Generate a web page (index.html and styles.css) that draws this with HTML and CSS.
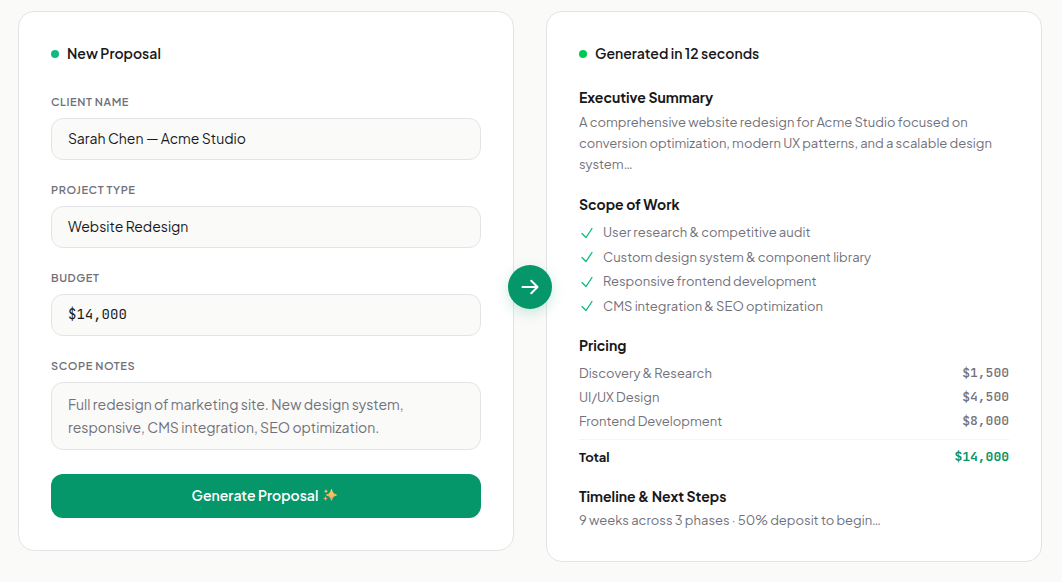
FILE: index.html
```html
<!DOCTYPE html>
<html lang="en">
<head>
    <meta charset="UTF-8">
    <meta name="viewport" content="width=device-width, initial-scale=1.0">
    <title>New Proposal</title>
    <link rel="stylesheet" href="styles.css">
</head>
<body>
<main class="demo">
    <form class="card">
        <h2 class="card-title"><span class="dot"></span>New Proposal</h2>
        <div class="field">
            <label for="client">CLIENT NAME</label>
            <input id="client" type="text" value="Sarah Chen — Acme Studio">
        </div>
        <div class="field">
            <label for="type">PROJECT TYPE</label>
            <input id="type" type="text" value="Website Redesign">
        </div>
        <div class="field">
            <label for="budget">BUDGET</label>
            <input id="budget" class="mono" type="text" value="$14,000">
        </div>
        <div class="field">
            <label for="notes">SCOPE NOTES</label>
            <textarea id="notes" rows="2">Full redesign of marketing site. New design system, responsive, CMS integration, SEO optimization.</textarea>
        </div>
        <button class="generate" type="button">
            Generate Proposal
            <svg width="17" height="14" viewBox="0 0 17 14" aria-hidden="true">
                <defs>
                    <linearGradient id="spark" x1="0" y1="0" x2="0" y2="1">
                        <stop offset="0" stop-color="#ffd65c"/>
                        <stop offset="1" stop-color="#ff9a5c"/>
                    </linearGradient>
                </defs>
                <path fill="url(#spark)" stroke="url(#spark)" stroke-linejoin="round" d="M8.5 1.5C9.2 4.8 10.4 6 13.5 7C10.4 8 9.2 9.2 8.5 12.5C7.8 9.2 6.6 8 3.5 7C6.6 6 7.8 4.8 8.5 1.5Z"/>
                <path fill="#ffc067" d="M3 1C3.4 2.5 3.8 2.9 5.3 3.3C3.8 3.7 3.4 4.1 3 5.6C2.6 4.1 2.2 3.7 .7 3.3C2.2 2.9 2.6 2.5 3 1Z"/>
                <path fill="#ffa565" d="M2.5 8C2.9 9.7 3.4 10.2 5 10.6C3.4 11 2.9 11.5 2.5 13.2C2.1 11.5 1.6 11 0 10.6C1.6 10.2 2.1 9.7 2.5 8Z"/>
            </svg>
        </button>
    </form>

    <div class="arrow">
        <svg width="20" height="20" viewBox="0 0 24 24" aria-hidden="true">
            <path d="M13.5 4.5 21 12m0 0-7.5 7.5M21 12H3"/>
        </svg>
    </div>

    <article class="card">
        <h2 class="card-title"><span class="dot dot-done"></span>Generated in 12 seconds</h2>
        <section>
            <h3>Executive Summary</h3>
            <p class="summary">A comprehensive website redesign for Acme Studio focused on conversion optimization, modern UX patterns, and a scalable design system…</p>
        </section>
        <section>
            <h3>Scope of Work</h3>
            <ul class="scope">
                <li><svg class="check" viewBox="0 0 24 24" aria-hidden="true"><path d="m4.5 12.75 6 6 9-13.5"/></svg>User research &amp; competitive audit</li>
                <li><svg class="check" viewBox="0 0 24 24" aria-hidden="true"><path d="m4.5 12.75 6 6 9-13.5"/></svg>Custom design system &amp; component library</li>
                <li><svg class="check" viewBox="0 0 24 24" aria-hidden="true"><path d="m4.5 12.75 6 6 9-13.5"/></svg>Responsive frontend development</li>
                <li><svg class="check" viewBox="0 0 24 24" aria-hidden="true"><path d="m4.5 12.75 6 6 9-13.5"/></svg>CMS integration &amp; SEO optimization</li>
            </ul>
        </section>
        <section>
            <h3>Pricing</h3>
            <table class="pricing">
                <tbody>
                    <tr><th scope="row">Discovery &amp; Research</th><td>$1,500</td></tr>
                    <tr><th scope="row">UI/UX Design</th><td>$4,500</td></tr>
                    <tr><th scope="row">Frontend Development</th><td>$8,000</td></tr>
                </tbody>
                <tfoot>
                    <tr><th scope="row">Total</th><td>$14,000</td></tr>
                </tfoot>
            </table>
        </section>
        <section>
            <h3>Timeline &amp; Next Steps</h3>
            <p>9 weeks across 3 phases · 50% deposit to begin…</p>
        </section>
    </article>
</main>
</body>
</html>
```
FILE: styles.css
```css
* {
    box-sizing: border-box;
}
body {
    margin: 0;
    padding: 11px 20px 20px 18px;
    background: #fafaf9;
    color: #18181b;
    font-family: "Plus Jakarta Sans", Inter, sans-serif;
    font-size: 13px;
    line-height: 20px;
}
h2, h3, p, ul {
    margin: 0;
    padding: 0;
}
.demo {
    position: relative;
    display: grid;
    grid-template-columns: 1fr 1fr;
    align-items: start;
    gap: 32px;
}
.card {
    padding: 32px;
    background: #fff;
    border: 1px solid #e4e4e7;
    border-radius: 16px;
}
.card-title {
    display: flex;
    align-items: center;
    gap: 8px;
    margin-bottom: 26px;
    font-size: 14px;
    font-weight: 600;
    line-height: 18px;
}
.dot {
    width: 8px;
    height: 8px;
    margin-top: 2px;
    border-radius: 50%;
    background: #10b981;
}
.dot-done {
    background: #00c950;
}

/* form */
form .card-title {
    margin-bottom: 32px;
}
.field {
    margin-bottom: 22px;
}
label {
    display: block;
    margin-bottom: 8px;
    color: #71717a;
    font-size: 11px;
    font-weight: 600;
    letter-spacing: 0.05em;
    line-height: 16px;
}
input, textarea {
    display: block;
    width: 100%;
    padding: 9px 16px 11px;
    background: #fafaf9;
    border: 1px solid #e4e4e7;
    border-radius: 12px;
    color: #18181b;
    font-family: inherit;
    font-size: 14px;
    line-height: 20px;
}
textarea {
    padding: 10px 16px;
    color: #71717a;
    line-height: 23px;
    resize: none;
    overflow: hidden;
}
.mono, .pricing td {
    font-family: "JetBrains Mono", "DejaVu Sans Mono", monospace;
}
.generate {
    display: flex;
    align-items: center;
    justify-content: center;
    gap: 5px;
    width: 100%;
    height: 44px;
    margin-top: 24px;
    padding: 0 0 2px;
    background: #059669;
    border: 0;
    border-radius: 12px;
    color: #fff;
    font-family: inherit;
    font-size: 14px;
    font-weight: 600;
}

/* arrow between the cards */
.arrow {
    position: absolute;
    top: 50%;
    left: 50%;
    transform: translate(-50%, -50%);
    display: flex;
    align-items: center;
    justify-content: center;
    width: 44px;
    height: 44px;
    border-radius: 50%;
    background: #059669;
    box-shadow: 0 4px 14px rgba(5, 150, 105, 0.2);
}
.arrow path, .check path {
    fill: none;
    stroke: #fff;
    stroke-width: 2.5;
    stroke-linecap: round;
    stroke-linejoin: round;
}

/* generated proposal */
section + section {
    margin-top: 20px;
}
h3 {
    margin-bottom: 6px;
    font-size: 14px;
    font-weight: 700;
    line-height: 18px;
}
section p {
    color: #71717a;
    line-height: 18px;
}
section .summary {
    line-height: 21px;
}
.scope {
    display: grid;
    gap: 5px;
    padding-top: 4px;
    color: #71717a;
    line-height: 1.5;
    list-style: none;
}
.scope li {
    display: flex;
    align-items: center;
    gap: 8px;
}
.check {
    width: 16px;
    height: 16px;
}
.check path {
    stroke: #10b981;
    stroke-width: 2;
}
.pricing {
    width: 100%;
    padding-top: 1px;
    border-spacing: 0;
    color: #71717a;
}
.pricing th {
    padding: 2px 0;
    font-weight: 400;
    text-align: left;
}
.pricing td {
    padding: 2px 0;
    font-weight: 500;
    text-align: right;
}
.pricing tbody tr:last-child > * {
    padding-bottom: 8px;
}
.pricing tfoot th, .pricing tfoot td {
    padding: 7px 0 0;
    border-top: 1px solid #f4f4f5;
    color: #18181b;
    font-weight: 700;
}
.pricing tfoot td {
    color: #059669;
}
```
